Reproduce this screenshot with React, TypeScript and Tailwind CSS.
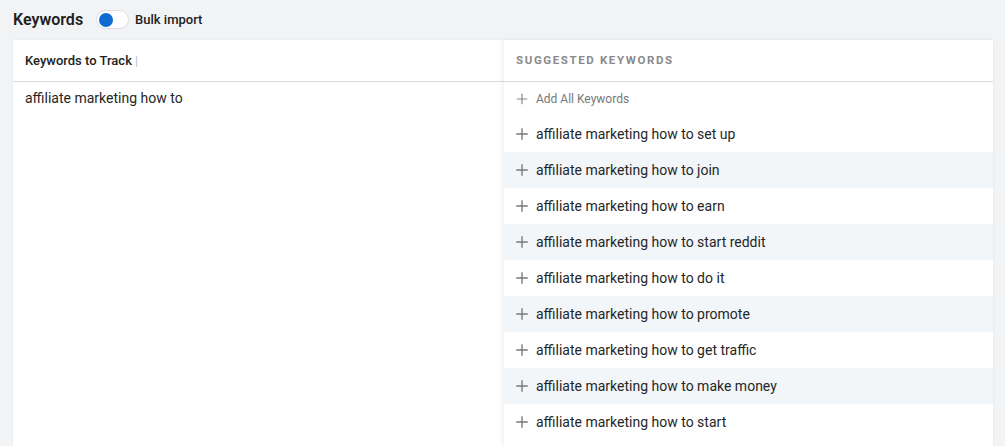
import { Plus } from "lucide-react";

const suggestions = [
  "affiliate marketing how to set up",
  "affiliate marketing how to join",
  "affiliate marketing how to earn",
  "affiliate marketing how to start reddit",
  "affiliate marketing how to do it",
  "affiliate marketing how to promote",
  "affiliate marketing how to get traffic",
  "affiliate marketing how to make money",
  "affiliate marketing how to start",
];

export default function App() {
  return (
    <div className="flex h-[446px] w-[1005px] flex-col overflow-hidden bg-[#f2f3f5] font-['Roboto',sans-serif]">
      <div className="flex h-[40px] shrink-0 items-center gap-[13px] pl-[13px] pb-[1px]">
        <span className="text-[16px] font-semibold text-[#1f1f1f]">Keywords</span>
        <div className="flex items-center gap-[6px]">
          <div className="flex h-[19px] w-[33px] items-center rounded-full border border-[#dcdfe3] bg-white pl-[2px]">
            <div className="h-[14px] w-[14px] rounded-full bg-[#0f6bd1]" />
          </div>
          <span className="text-[13px] font-medium text-[#222]">Bulk import</span>
        </div>
      </div>

      <div className="ml-[13px] flex w-[980px] flex-1 bg-white shadow-[0_0_3px_rgba(0,0,0,0.05)]">
        <div className="w-[491px] shrink-0">
          <div className="flex h-[42px] items-center border-b border-[#dadce0] pl-[12px]">
            <span className="text-[13px] font-medium text-[#222]">Keywords to Track</span>
            <span className="ml-[3px] text-[12px] text-[#bbb]">|</span>
          </div>
          <div className="pl-[12px] pt-[6px] text-[14px] text-[#262626]">
            affiliate marketing how to
          </div>
        </div>

        <div className="relative z-10 flex-1 shadow-[-2px_0_4px_rgba(0,0,0,0.06)]">
          <div className="flex h-[42px] items-center border-b border-[#dadce0] pl-[12px] pt-[1px]">
            <span className="text-[11.5px] font-bold tracking-[0.14em] text-[#8a8a8a]">
              SUGGESTED KEYWORDS
            </span>
          </div>
          <div>
            <div className="flex h-[34px] items-center gap-[6px] pl-[10px] text-[12px] text-[#777]">
              <Plus size={16} strokeWidth={1.8} className="text-[#888]" />
              Add All Keywords
            </div>
            {suggestions.map((s, i) => (
              <div
                key={s}
                className={`flex h-[36px] items-center gap-[5px] pl-[9px] text-[14px] text-[#262626] ${
                  i % 2 === 1 ? "bg-[#f2f6f9]" : "bg-white"
                }`}
              >
                <Plus size={18} strokeWidth={1.8} className="text-[#777]" />
                {s}
              </div>
            ))}
          </div>
        </div>
      </div>
    </div>
  );
}
